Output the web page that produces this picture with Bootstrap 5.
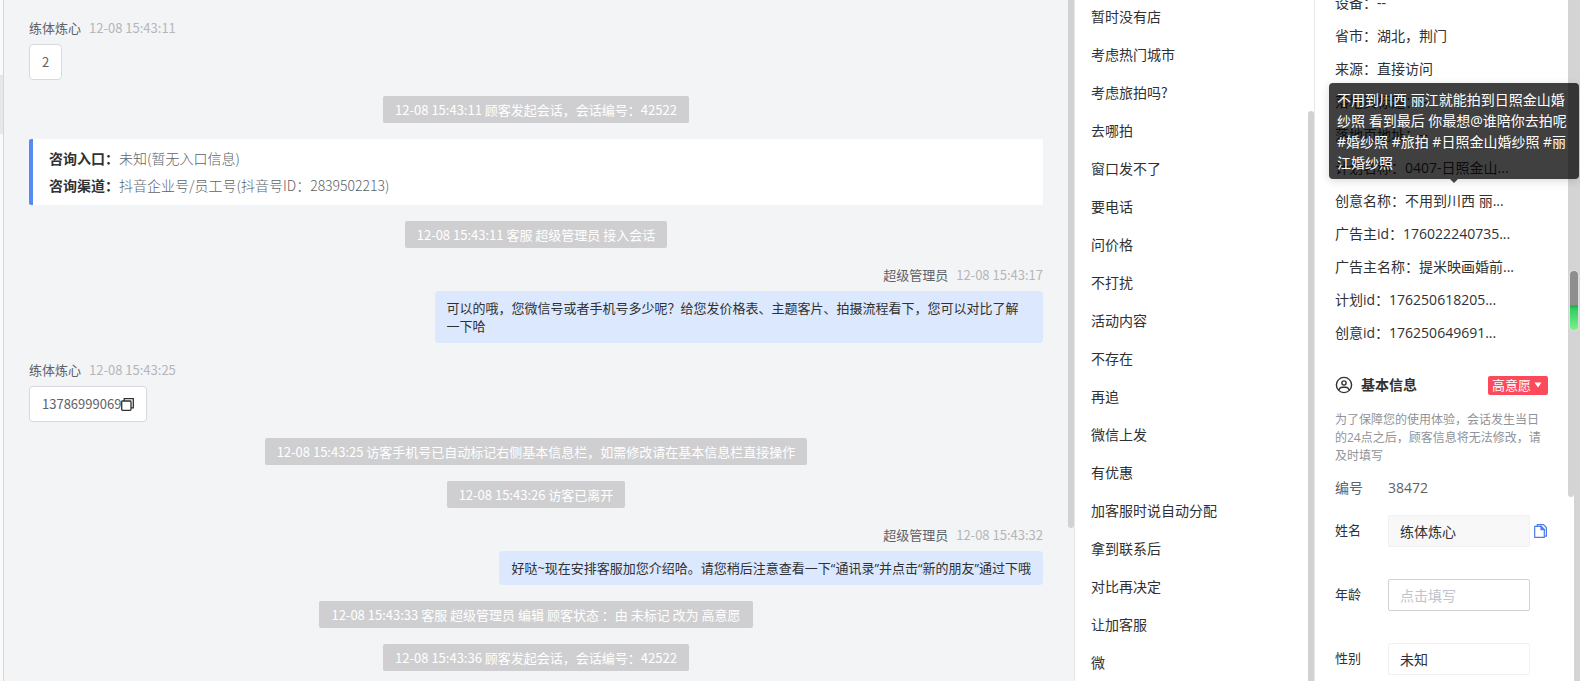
<!DOCTYPE html>
<html lang="zh-CN">
<head>
<meta charset="utf-8">
<meta name="viewport" content="width=device-width, initial-scale=1">
<title>客服会话</title>
<link rel="stylesheet" href="https://cdn.jsdelivr.net/npm/bootstrap@5.3.0/dist/css/bootstrap.min.css">
<style>
  body { font-family: "Noto Sans CJK SC", sans-serif; font-size: 14px; color: #303133; background: #fff; }
  .edge { width: 4px; border-right: 1px solid #d3d6dc; padding-top: 75px; background: #fafafa; }
  .edge-mark { height: 59px; background: #e6e7e9; }
  .chat { background: #f3f4f6; font-size: 13px; }
  .stream { padding: 17px 25px 10px; gap: 16px; }
  .track { width: 6px; }
  .thumb { background: #d2d2d3; border-radius: 0 0 3px 3px; }
  .chat .thumb { height: 77.5%; }
  .who { line-height: 22px; margin-bottom: 5px; gap: 8px; color: #606266; }
  .who time { color: #b4b6ba; }
  .bubble { line-height: 18px; padding: 8px 12px; border-radius: 4px; }
  .bubble-in { background: #fff; border: 1px solid #d6d9de; color: #606266; }
  .bubble-out { background: #dce8fd; max-width: 60%; }
  .mixed { font-family: "Open Sans", "Noto Sans CJK SC", sans-serif; }
  .notice { background: #cfcfd1; color: #fff; line-height: 19px; padding: 4px 12px; border-radius: 2px; }
  .entry { background: #fff; border-left: 4px solid #568af4; border-radius: 2px; padding: 6px 16px; font-size: 14px; line-height: 27px; color: #606266; font-weight: 300; }
  .entry dt { color: #303133; font-weight: 700; }
  .phrases { width: 240px; border-left: 1px solid #e4e6ea; }
  .phrases ul { margin-top: -3px; }
  .phrases button { height: 38px; padding: 0 16px; line-height: 38px; border: 0; background: none; color: #303133; }
  .phrases .track { padding-top: 111px; }
  .phrases .thumb { border-radius: 3px 3px 0 0; }
  .visitor { width: 266px; border-left: 1px solid #e4e6ea; font-family: "Open Sans", "Noto Sans CJK SC", sans-serif; }
  .facts { margin: -14px 0 0 20px; line-height: 33px; }
  .fact { position: relative; height: 33px; white-space: nowrap; }
  .tip { position: absolute; z-index: 2; right: -11px; bottom: calc(100% + 5px); width: 250px; padding: 6px 8px; line-height: 21px; white-space: normal; color: #fff; background: rgba(0,0,0,.75); border-radius: 4px; box-shadow: 0 2px 8px rgba(0,0,0,.15); }
  .tip::after { content: ""; position: absolute; top: 100%; left: 50%; margin-left: -4px; border: 4px solid transparent; border-top-color: #404040; border-bottom: 0; }
  .basics { padding: 0 20px; margin-top: 26px; }
  .basics h2 { font-size: 14px; font-weight: 600; line-height: 20px; }
  .level { height: 19px; padding: 0 4px; font-size: 13px; line-height: 19px; color: #fff; background: #fd4a5a; border: 0; border-radius: 2px; gap: 1px; }
  .hint { margin: 16px 0 0; font-size: 12px; line-height: 18px; color: #909399; }
  .line .key { width: 53px; font-size: 13px; flex: none; }
  .line .num { color: #606266; }
  .idrow { line-height: 20px; margin: 13px 0 17px; color: #606266; }
  .idrow .key { font-size: 14px; }
  .box { width: 142px; height: 32px; padding: 0 11px; font-size: 14px; border: 1px solid #f1f1f3; border-radius: 2px; color: #303133; background: #fff; appearance: none; }
  .box[readonly] { background: #f8f8f9; }
  .box-edit { border-color: #d0d2d6; }
  .box::placeholder { color: #c0c4cc; opacity: 1; }
  .fields { gap: 32px; }
  .visitor .track-in { width: 6px; }
  .visitor .track-in .thumb { height: 73%; background: #d4d4d4; }
  .track-out { width: 6px; background: #d4d4d4; position: relative; }
  .gauge { position: absolute; right: 2px; top: 271px; width: 8px; height: 59px; border-radius: 4px; background: linear-gradient(#8e8e8e 0 34px, #1fb750 34px 36px, #2fcf63 38px, #7df08a); box-shadow: 0 0 2px rgba(255,255,255,.9); }
</style>
</head>
<body>
<div class="d-flex vh-100 overflow-hidden">
  <div class="edge flex-shrink-0"><div class="edge-mark"></div></div>

  <main class="chat d-flex flex-grow-1 overflow-hidden">
    <div class="stream d-flex flex-column flex-grow-1">
      <div class="d-flex flex-column align-items-start">
        <div class="who d-flex"><span>练体炼心</span><time>12-08 15:43:11</time></div>
        <div class="bubble bubble-in">2</div>
      </div>
      <div class="notice align-self-center">12-08 15:43:11 顾客发起会话，会话编号：42522</div>
      <dl class="entry mb-0">
        <div class="d-flex"><dt>咨询入口：</dt><dd class="mb-0">未知(暂无入口信息)</dd></div>
        <div class="d-flex"><dt>咨询渠道：</dt><dd class="mb-0">抖音企业号/员工号(抖音号ID：2839502213)</dd></div>
      </dl>
      <div class="notice align-self-center">12-08 15:43:11 客服 超级管理员 接入会话</div>
      <div class="d-flex flex-column align-items-end">
        <div class="who d-flex"><span>超级管理员</span><time>12-08 15:43:17</time></div>
        <div class="bubble bubble-out">可以的哦，您微信号或者手机号多少呢？给您发价格表、主题客片、拍摄流程看下，您可以对比了解一下哈</div>
      </div>
      <div class="d-flex flex-column align-items-start">
        <div class="who d-flex"><span>练体炼心</span><time>12-08 15:43:25</time></div>
        <div class="bubble bubble-in d-flex align-items-center">13786999069<button type="button" class="btn p-0 border-0 d-flex" aria-label="复制"><svg width="13" height="13" viewBox="0 0 13 13" fill="none" stroke="#303133" stroke-width="1.3"><rect x=".7" y="3" width="9.300" height="9.300" rx=".8"/><path d="M3.200 3V.7h9.100v9.100H10"/></svg></button></div>
      </div>
      <div class="notice align-self-center">12-08 15:43:25 访客手机号已自动标记右侧基本信息栏，如需修改请在基本信息栏直接操作</div>
      <div class="notice align-self-center">12-08 15:43:26 访客已离开</div>
      <div class="d-flex flex-column align-items-end">
        <div class="who d-flex"><span>超级管理员</span><time>12-08 15:43:32</time></div>
        <div class="bubble bubble-out mixed">好哒~现在安排客服加您介绍哈。请您稍后注意查看一下“通讯录”并点击“新的朋友”通过下哦</div>
      </div>
      <div class="notice align-self-center">12-08 15:43:33 客服 超级管理员 编辑 顾客状态 ：由 未标记 改为 高意愿</div>
      <div class="notice align-self-center">12-08 15:43:36 顾客发起会话，会话编号：42522</div>
    </div>
    <div class="track flex-shrink-0"><div class="thumb"></div></div>
  </main>

  <aside class="phrases d-flex flex-shrink-0">
    <ul class="list-unstyled mb-0 flex-grow-1">
      <li><button type="button" class="w-100 text-start">暂时没有店</button></li>
      <li><button type="button" class="w-100 text-start">考虑热门城市</button></li>
      <li><button type="button" class="w-100 text-start">考虑旅拍吗?</button></li>
      <li><button type="button" class="w-100 text-start">去哪拍</button></li>
      <li><button type="button" class="w-100 text-start">窗口发不了</button></li>
      <li><button type="button" class="w-100 text-start">要电话</button></li>
      <li><button type="button" class="w-100 text-start">问价格</button></li>
      <li><button type="button" class="w-100 text-start">不打扰</button></li>
      <li><button type="button" class="w-100 text-start">活动内容</button></li>
      <li><button type="button" class="w-100 text-start">不存在</button></li>
      <li><button type="button" class="w-100 text-start">再追</button></li>
      <li><button type="button" class="w-100 text-start">微信上发</button></li>
      <li><button type="button" class="w-100 text-start">有优惠</button></li>
      <li><button type="button" class="w-100 text-start">加客服时说自动分配</button></li>
      <li><button type="button" class="w-100 text-start">拿到联系后</button></li>
      <li><button type="button" class="w-100 text-start">对比再决定</button></li>
      <li><button type="button" class="w-100 text-start">让加客服</button></li>
      <li><button type="button" class="w-100 text-start">微</button></li>
    </ul>
    <div class="track d-flex flex-column"><div class="thumb flex-grow-1"></div></div>
  </aside>

  <aside class="visitor d-flex flex-shrink-0">
    <div class="flex-grow-1">
      <div class="facts">
        <div class="fact">设备：--</div>
        <div class="fact">省市：湖北，荆门</div>
        <div class="fact">来源：直接访问</div>
        <div class="fact">落地页标题：--</div>
        <div class="fact">落地页地址：--</div>
        <div class="fact">计划名称：0407-日照金山...</div>
        <div class="fact">创意名称：不用到川西 丽...<div class="tip" role="tooltip">不用到川西 丽江就能拍到日照金山婚纱照 看到最后 你最想@谁陪你去拍呢 #婚纱照 #旅拍 #日照金山婚纱照 #丽江婚纱照</div></div>
        <div class="fact">广告主id：176022240735...</div>
        <div class="fact">广告主名称：提米映画婚前...</div>
        <div class="fact">计划id：176250618205...</div>
        <div class="fact">创意id：176250649691...</div>
      </div>
      <section class="basics">
        <div class="d-flex align-items-center">
          <svg class="me-2" width="18" height="18" viewBox="0 0 18 18" fill="none" stroke="#303133" stroke-width="1.4"><circle cx="9" cy="9" r="7.600"/><circle cx="9" cy="7" r="2.100"/><path d="M3.900 14.200c.5-2.200 1.800-3 3.400-3h3.400c1.600 0 2.900.8 3.400 3"/></svg>
          <h2 class="mb-0 me-auto">基本信息</h2>
          <button type="button" class="level d-flex align-items-center">高意愿<svg width="12" height="8" viewBox="0 0 12 8"><path d="M2.500 1.500h7L6 6.500z" fill="#fff"/></svg></button>
        </div>
        <p class="hint">为了保障您的使用体验，会话发生当日的24点之后，顾客信息将无法修改，请及时填写</p>
        <div class="line idrow d-flex"><span class="key">编号</span><span class="num">38472</span></div>
        <div class="fields d-flex flex-column">
          <div class="line d-flex align-items-center">
            <label class="key" for="f-name">姓名</label>
            <input id="f-name" class="box" type="text" value="练体炼心" readonly>
            <button type="button" class="btn p-0 border-0 d-flex ms-1" aria-label="复制姓名"><svg width="13" height="14" viewBox="0 0 13 14" fill="none" stroke="#4a7df0" stroke-width="1.2"><path d="M3.300 2.200V.7h6.200l2.900 2.900v8.600h-1.800"/><path d="M.7 2.400h6.500l3.100 3.100v7.800H.7z"/><path d="M7 2.400v3.300h3.300z" fill="#4a7df0"/></svg></button>
          </div>
          <div class="line d-flex align-items-center">
            <label class="key" for="f-age">年龄</label>
            <input id="f-age" class="box box-edit" type="text" placeholder="点击填写">
          </div>
          <div class="line d-flex align-items-center">
            <label class="key" for="f-sex">性别</label>
            <select id="f-sex" class="box"><option>未知</option><option>男</option><option>女</option></select>
          </div>
        </div>
      </section>
    </div>
    <div class="track-in flex-shrink-0"><div class="thumb"></div></div>
    <div class="track-out flex-shrink-0"><div class="gauge"></div></div>
  </aside>
</div>
<script src="https://cdn.jsdelivr.net/npm/bootstrap@5.3.0/dist/js/bootstrap.bundle.min.js"></script>
</body>
</html>
